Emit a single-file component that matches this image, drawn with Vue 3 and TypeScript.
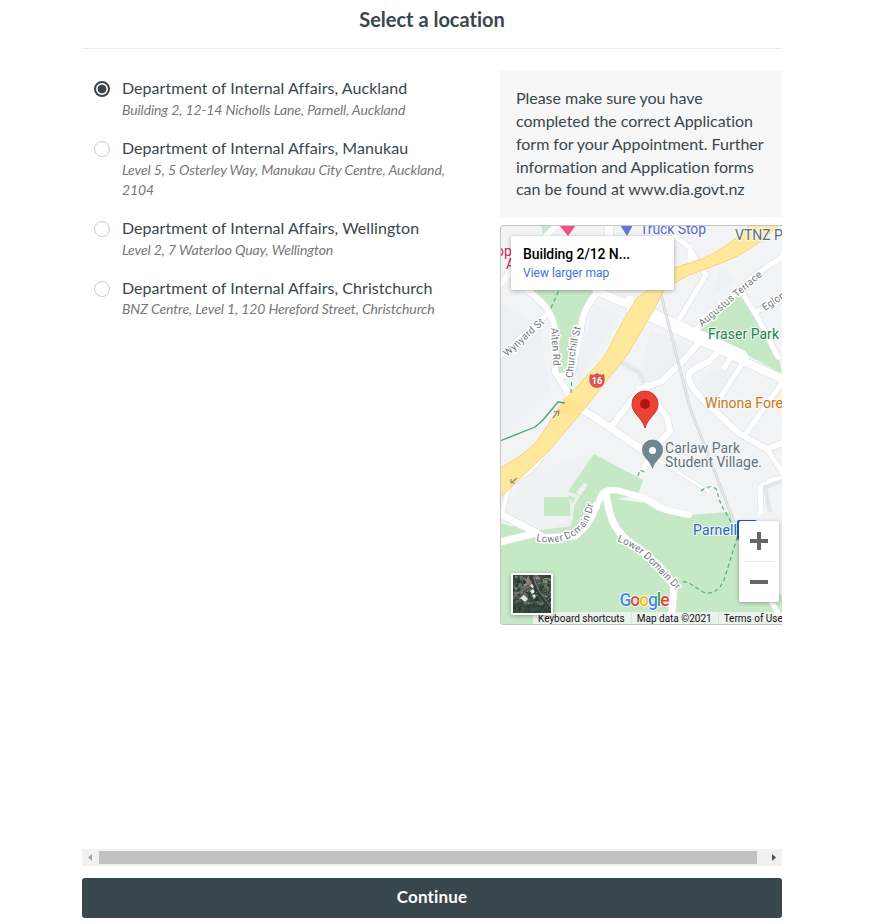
<script setup lang="ts">
import { ref } from 'vue'

interface Office {
  id: string
  name: string
  address: string
}

interface Patch {
  x: number
  y: number
  w: number
  h: number
  fill: string
}

const offices: Office[] = [
  { id: 'auckland', name: 'Department of Internal Affairs, Auckland', address: 'Building 2, 12-14 Nicholls Lane, Parnell, Auckland' },
  { id: 'manukau', name: 'Department of Internal Affairs, Manukau', address: 'Level 5, 5 Osterley Way, Manukau City Centre, Auckland, 2104' },
  { id: 'wellington', name: 'Department of Internal Affairs, Wellington', address: 'Level 2, 7 Waterloo Quay, Wellington' },
  { id: 'christchurch', name: 'Department of Internal Affairs, Christchurch', address: 'BNZ Centre, Level 1, 120 Hereford Street, Christchurch' },
]

const selected = ref<string>('auckland')

// Local streets in map coordinates, drawn with a grey casing under a white fill.
const streets: { d: string; w: number }[] = [
  { d: 'M500 356L545 316M500 286L516 262', w: 5 },
  { d: 'M500 284L513 270L556 226M527 290C545 303 553 313 556 335L555 372L571 398', w: 6 },
  { d: 'M599 290C586 306 582 314 581 330L572 374L558 377', w: 6 },
  { d: 'M597 290C620 304 632 302 645 315M630 300L631 318M609 226L609 237', w: 8 },
  { d: 'M645 312L701 338L742 357', w: 13 },
  { d: 'M735 357L782 379', w: 8 },
  { d: 'M621 362L640 373L645 383', w: 5 },
  { d: 'M640 389L662 381L684 360L698 344', w: 6 },
  { d: 'M640 389L611 427M645 388L667 417L670 431L657 445L644 469', w: 6 },
  { d: 'M579 408L593 416L650 455', w: 7 },
  { d: 'M650 455L708 491', w: 3 },
  { d: 'M674 236L689 247L699 265L706 275L680 318M690 247L690 264', w: 5 },
  { d: 'M782 257L754 276L740 289L696 329M740 289L758 318L778 357', w: 5 },
  { d: 'M757 311L774 304L782 300', w: 5 },
  { d: 'M720 350L708 362L696 368C685 374 686 382 704 401L740 434L767 449L782 443', w: 6 },
  { d: 'M731 356L725 367M742 364L720 398', w: 5 },
  { d: 'M782 383L745 435M767 449L782 472', w: 5 },
  { d: 'M761 512L760 487L772 480L782 478M745 555L782 620', w: 5 },
  { d: 'M546 453L531 470L509 485L502 514', w: 4 },
  { d: 'M500 514L533 531L544 538L575 536C587 527 593 517 596 505', w: 7 },
  { d: 'M500 542L536 533M606 492C609 524 620 538 640 549L659 566L674 586L671 625', w: 7 },
]

const greens: string[] = [
  'M500 523L531 531L570 526L577 505L586 487L616 499L645 503L658 511L690 515L728 512L742 535L760 570L782 597V625H500Z',
  'M526 290H596L583 309L572 373H559L558 335L547 307Z',
  'M541 226H560L544 236Z',
  'M700 329L740 289L778 355L782 374L753 358Z',
]

const thumbSize = 38
const palette = ['#2c3d32', '#4b5c4f', '#6f7469', '#85827a', '#3a5140', '#a09b98', '#4d5a5e', '#22352a']
const patches: Patch[] = []
let seed = 47
const next = (): number => {
  seed = (seed * 16807) % 2147483647
  return seed / 2147483647
}
for (let i = 0; i < 560; i++) {
  const y = next() * thumbSize
  const shade = y > 28 ? Math.floor(next() * 2) * 4 : Math.floor(next() * palette.length)
  patches.push({ x: next() * thumbSize, y, w: 1 + next() * 2.5, h: 1 + next() * 2, fill: palette[shade] })
}
</script>

<template>
  <main class="page">
    <header class="head">
      <h1>Select a location</h1>
    </header>

    <section class="body">
      <div class="offices" role="radiogroup" aria-label="Location">
        <label v-for="o in offices" :key="o.id" class="office">
          <input v-model="selected" type="radio" name="office" :value="o.id" class="radio" />
          <span class="office-text">
            <span class="name">{{ o.name }}</span>
            <span class="address">{{ o.address }}</span>
          </span>
        </label>
      </div>

      <aside class="side">
        <p class="notice">Please make sure you have completed the correct Application form for your Appointment. Further information and Application forms can be found at www.dia.govt.nz</p>

        <div class="map">
          <svg class="canvas" width="282" height="400" viewBox="500 225 282 400">
            <defs>
              <path id="domain-west" d="M536 541C560 546 580 537 588 522Q593 511 595 495" />
              <path id="domain-east" d="M617 541Q637 549 651 564Q664 578 680 593" />
              <path id="augustus" d="M702 327L768 271" />
              <path id="wynyard" d="M507 357L550 318" />
              <path id="alten" d="M551 328L554 375" />
              <path id="churchill" d="M573 378Q574 351 583 320" />
              <path id="eglon" d="M765 311L793 292" />
            </defs>
            <rect x="500" y="225" width="282" height="400" fill="#f1f3f4" />
            <path d="M500 300L540 330L550 390L500 440ZM595 305L620 315L580 380L575 372ZM650 330L690 346L664 376L640 381ZM708 300L735 280L722 267ZM710 370L739 367L715 400L695 385Z" fill="#eef1f3" />
            <path v-for="g in greens" :key="g" :d="g" fill="#c5e8c5" />
            <path d="M500 523L503 508L531 470L594 454L567 502L577 505L570 526L531 531Z" fill="#eff1f3" />
            <path d="M594 454L643 480L638 495L606 501L580 525L572 522L574 506L567 493Z" fill="#c5e8c5" />
            <path d="M544 497H570V516H544Z" fill="#c5e8c5" />
            <path d="M774 390L782 380V415L774 402Z" fill="#fdf0dc" />
            <g fill="none" stroke-linejoin="round">
              <path v-for="s in streets" :key="'c' + s.d" :d="s.d" stroke="#dfe3e8" :stroke-width="s.w + 1.4" />
              <path v-for="s in streets" :key="s.d" :d="s.d" stroke="#fff" :stroke-width="s.w" stroke-linecap="round" />
              <path d="M578 494L586 484" stroke="#eef1ef" stroke-width="5" />
              <path d="M567 493L578 497L573 505L571 521L556 527" stroke="#eaf2ea" stroke-width="3" />
              <path d="M596 508L602 494Q606 488 620 491L645 498L665 510L689 515" stroke="#fff" stroke-width="6" stroke-linecap="round" />
              <path d="M621 362L640 373L645 383M770 512L765 487L782 481" stroke="#e1e6ea" stroke-width="4" />
              <path d="M660 291L690 408L738 532" stroke="#d5d7da" stroke-width="3" />
              <path d="M660 291L690 408L738 532" stroke="#eceef0" stroke-width="1" />
            </g>
            <path d="M500 468Q525 455 538 440L563 402L605 356L624 319L637 298L655 285L674 268L702 259Q731 246 750 225H779Q753 251 724 262L689 275L665 288L653 311L628 354L585 408L548 452L513 485L500 498Z" fill="#ffe89c" stroke="#f8d476" stroke-width="1" />
            <path d="M565 397L585 407L576 418L556 411Z" fill="#ffe292" />
            <path d="M500 441L535 427L543 420L558 402L565 403" fill="none" stroke="#45a76a" stroke-width="1.3" />
            <path d="M571 393L572 375M551 308L560 288M638 476L640 470L647 473M701 491Q711 483 717 490Q719 503 726 513L738 535L724 580Q716 597 703 592C695 588 690 580 678 582" fill="none" stroke="#56ad73" stroke-width="1.2" stroke-dasharray="4 3" />
            <g fill="none" stroke="#8d8b76" stroke-width="1.2">
              <path d="M553 418L558 411M554 412L559 411L558 416" />
              <path d="M517 478L511 483M511 479V483H515" />
            </g>

            <g class="street-label">
              <text><textPath href="#domain-west">Lower Domain Dr</textPath></text>
              <text><textPath href="#domain-east">Lower Domain Dr</textPath></text>
              <text><textPath href="#augustus">Augustus Terrace</textPath></text>
              <text><textPath href="#wynyard">Wynyard St</textPath></text>
              <text><textPath href="#alten">Alten Rd</textPath></text>
              <text><textPath href="#churchill">Churchill St</textPath></text>
              <text><textPath href="#eglon">Eglon St</textPath></text>
            </g>

            <g class="poi">
              <text x="640" y="234" fill="#5c67ca" textLength="66">Truck Stop</text>
              <text x="735" y="240" fill="#5b6e78">VTNZ Parnell</text>
              <text x="708" y="339" fill="#218344" textLength="71">Fraser Park</text>
              <text x="705" y="408" fill="#c97817">Winona Forever</text>
              <text x="665" y="453" fill="#61737d" textLength="75">Carlaw Park</text>
              <text x="665" y="467" fill="#61737d" textLength="97">Student Village.</text>
              <text x="693" y="535" fill="#2866b8" textLength="44">Parnell</text>
              <text x="496" y="256" fill="#d81b60">op</text>
              <text x="506" y="269" fill="#d81b60">A</text>
            </g>
            <path d="M559 225H576L568 236Z" fill="#f14f88" />
            <path d="M620 225H633L627 236Z" fill="#6578cf" />

            <path d="M597 373Q601 376 604 374Q607 387 597 388Q587 387 590 374Q594 376 597 373Z" fill="#d85355" />
            <text x="597" y="384" class="shield">16</text>

            <path d="M652.500 469C650 460 642 458 642 449.500A10.500 10 0 0 1 663 449.500C663 458 655 460 652.500 469Z" fill="#708690" />
            <circle cx="652.500" cy="450.500" r="3.500" fill="#fff" />
            <path d="M645 428C642 417 632 414 632 404A13 13 0 0 1 658 404C658 414 648 417 645 428Z" fill="#ea4335" stroke="#c9352a" stroke-width="1" />
            <circle cx="645" cy="404" r="5" fill="#b31412" />

            <rect x="737" y="520" width="20" height="20" rx="2" fill="#1766bd" />
            <text x="619.500" y="606" class="google" textLength="50"><tspan fill="#4285f4">G</tspan><tspan fill="#ea4335">o</tspan><tspan fill="#fbbc04">o</tspan><tspan fill="#4285f4">g</tspan><tspan fill="#34a853">l</tspan><tspan fill="#ea4335">e</tspan></text>
          </svg>

          <div class="card">
            <strong>Building 2/12 N...</strong>
            <a>View larger map</a>
          </div>

          <div class="zoom">
            <button type="button" aria-label="Zoom in">
              <svg width="18" height="18" viewBox="0 0 18 18"><path d="M7 0h4v7h7v4h-7v7H7v-7H0V7h7z" fill="#666" /></svg>
            </button>
            <span class="rule"></span>
            <button type="button" aria-label="Zoom out">
              <svg width="18" height="18" viewBox="0 0 18 18"><path d="M0 7h18v4H0z" fill="#666" /></svg>
            </button>
          </div>

          <div class="legal">
            <span>Keyboard shortcuts</span>
            <span>Map data ©2021</span>
            <span>Terms of Use</span>
          </div>

          <div class="satellite">
            <svg :width="thumbSize" :height="thumbSize" viewBox="0 0 38 38">
              <rect width="38" height="38" fill="#39453c" />
              <rect v-for="(p, i) in patches" :key="i" :x="p.x" :y="p.y" :width="p.w" :height="p.h" :fill="p.fill" />
              <path d="M0 22L10 15L18 10L24 0" fill="none" stroke="#746e69" stroke-width="2" />
              <path d="M17 0L23 14L37 34" fill="none" stroke="#343b40" stroke-width="2.500" />
              <path d="M20 1L26 16L38 32" fill="none" stroke="#777a79" stroke-width="1" />
              <path d="M7 23l4-3 4 4-3 3zM17 16l3-2 2 3-3 2zM17 10l2-1 2 3-2 1zM19 21l2-2 2 2-2 2z" fill="#e3e5e6" />
              <path d="M12 4l4-1 3 5-5 2z" fill="#9b7a70" />
            </svg>
          </div>
        </div>
      </aside>
    </section>

    <div class="scrollbar">
      <svg class="arrow" width="17" height="17" viewBox="0 0 17 17"><path d="M10 5v7L6 8.500z" fill="#a3a3a3" /></svg>
      <span class="thumb"></span>
      <span class="gap"></span>
      <svg class="arrow" width="17" height="17" viewBox="0 0 17 17"><path d="M7 5v7l4-3.500z" fill="#505050" /></svg>
    </div>
    <button type="button" class="continue">Continue</button>
  </main>
</template>

<style>
body {
  background: #fff;
}
</style>

<style scoped>
.page {
  box-sizing: border-box;
  width: 700px;
  height: 924px;
  margin-left: 82px;
  display: flex;
  flex-direction: column;
  font-family: Lato, "Liberation Sans", sans-serif;
  font-size: 16px;
  line-height: 22.857px;
  font-variant-ligatures: none;
  color: #3a464d;
}
.head {
  box-sizing: border-box;
  height: 49px;
  padding-top: 8px;
  border-bottom: 1px solid #ececec;
  text-align: center;
}
h1 {
  margin: 0;
  font-size: 20px;
  line-height: 23px;
  font-weight: 700;
}
.body {
  display: flex;
  justify-content: space-between;
  height: 800px;
  padding-top: 22px;
  box-sizing: border-box;
}
.offices {
  width: 372px;
  padding: 6px 0 0 12px;
  box-sizing: border-box;
}
.office {
  display: flex;
  gap: 12px;
  margin-bottom: 17px;
}
.radio {
  appearance: none;
  flex: none;
  box-sizing: border-box;
  width: 16px;
  height: 16px;
  margin: 4px 0 0;
  border: 1px solid #ccc;
  border-radius: 50%;
  background: #fff;
}
.radio:checked {
  border: 2px solid #3a464d;
  background: radial-gradient(circle, #3a464d 0 4px, #fff 4.8px);
}
.office-text {
  display: flex;
  flex-direction: column;
}
.name {
  letter-spacing: 0.05px;
}
.address {
  font-size: 14px;
  line-height: 20px;
  font-style: italic;
  letter-spacing: -0.11px;
  color: #777;
}
.side {
  width: 282px;
}
.notice {
  margin: 0 0 8px;
  padding: 16px;
  letter-spacing: -0.03px;
  background: #f7f7f7;
}
.map {
  position: relative;
  box-sizing: border-box;
  width: 282px;
  height: 400px;
  overflow: hidden;
  border-radius: 4px 0 0 4px;
  font-family: Roboto, sans-serif;
}
.map::after {
  content: "";
  position: absolute;
  inset: 0;
  border: 1px solid #c4c6c6;
  border-right: 0;
  border-radius: 4px 0 0 4px;
  pointer-events: none;
}
.canvas {
  display: block;
}
.street-label text {
  font-size: 10.200px;
  fill: #707579;
  stroke: #fff;
  stroke-width: 3px;
  stroke-linejoin: round;
  paint-order: stroke;
}
.poi text {
  font-size: 14px;
  stroke: #f7f8f9;
  stroke-width: 2px;
  stroke-linejoin: round;
  paint-order: stroke;
}
.shield {
  font-size: 9px;
  font-weight: 700;
  fill: #fff;
  text-anchor: middle;
}
.google {
  font-size: 17.500px;
  font-weight: 500;
  stroke: #fff;
  stroke-width: 1.500px;
  paint-order: stroke;
}
.card {
  position: absolute;
  left: 11px;
  top: 11px;
  box-sizing: border-box;
  width: 163px;
  height: 54px;
  padding: 9px 12px;
  display: flex;
  flex-direction: column;
  background: #fff;
  border-radius: 2px;
  box-shadow: 0 1px 4px rgba(0, 0, 0, 0.3);
}
.card strong {
  font-size: 14px;
  line-height: 19px;
  font-weight: 500;
  letter-spacing: -0.1px;
  color: #000;
}
.card a {
  font-size: 12px;
  line-height: 18px;
  color: #4272db;
}
.zoom {
  position: absolute;
  left: 239px;
  top: 296px;
  width: 40px;
  height: 81px;
  display: flex;
  flex-direction: column;
  align-items: center;
  background: #fff;
  border-radius: 2px;
  box-shadow: 0 1px 4px rgba(0, 0, 0, 0.3);
}
.zoom button {
  width: 40px;
  height: 40px;
  padding: 0;
  border: 0;
  background: none;
  display: grid;
  place-items: center;
}
.rule {
  width: 30px;
  height: 1px;
  background: #e6e6e6;
}
.legal {
  position: absolute;
  left: 33px;
  bottom: 0;
  height: 13px;
  display: flex;
  font-size: 10px;
  line-height: 13px;
  color: #111;
  white-space: nowrap;
}
.legal span {
  padding: 0 6px 0 5px;
  background: rgba(245, 245, 245, 0.8);
  border-right: 1px solid #dce3dc;
}
.satellite {
  position: absolute;
  left: 11px;
  top: 348px;
  width: 38px;
  height: 38px;
  border: 2px solid #fff;
  border-radius: 2px;
  overflow: hidden;
  box-shadow: 0 1px 4px rgba(0, 0, 0, 0.3);
}
.satellite svg {
  display: block;
}
.scrollbar {
  display: flex;
  align-items: center;
  height: 17px;
  background: #f1f1f1;
}
.arrow {
  flex: none;
}
.thumb {
  width: 658px;
  height: 13px;
  background: #c1c1c1;
}
.gap {
  flex: 1;
}
.continue {
  height: 40px;
  margin-top: 12px;
  padding: 0 0 4px;
  border: 0;
  border-radius: 3px;
  background: #3a464d;
  color: #fff;
  font: 700 17px/23px Lato, sans-serif;
  font-variant-ligatures: none;
  letter-spacing: 0.15px;
}
</style>
